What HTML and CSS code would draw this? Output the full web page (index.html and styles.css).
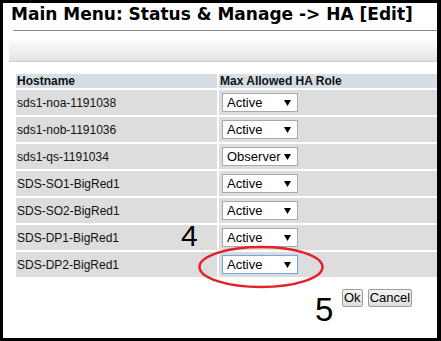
FILE: index.html
```html
<!DOCTYPE html>
<html>
<head>
<meta charset="utf-8">
<link rel="stylesheet" href="styles.css">
</head>
<body>
<div class="window">
  <h1 class="title">Main Menu: Status &amp; Manage -&gt; HA [Edit]</h1>
  <div class="rule"></div>
  <div class="toolbar"></div>
  <table class="grid">
    <tr class="head"><th class="c1">Hostname</th><th>Max Allowed HA Role</th></tr>
    <tr><td>sds1-noa-1191038</td><td><div class="sel"><span>Active</span><svg class="arr" width="7" height="6" viewBox="0 0 7 6"><polygon points="0,0 7,0 3.5,6"/></svg></div></td></tr>
    <tr><td>sds1-nob-1191036</td><td><div class="sel"><span>Active</span><svg class="arr" width="7" height="6" viewBox="0 0 7 6"><polygon points="0,0 7,0 3.5,6"/></svg></div></td></tr>
    <tr><td>sds1-qs-1191034</td><td><div class="sel"><span>Observer</span><svg class="arr" width="7" height="6" viewBox="0 0 7 6"><polygon points="0,0 7,0 3.5,6"/></svg></div></td></tr>
    <tr><td>SDS-SO1-BigRed1</td><td><div class="sel"><span>Active</span><svg class="arr" width="7" height="6" viewBox="0 0 7 6"><polygon points="0,0 7,0 3.5,6"/></svg></div></td></tr>
    <tr><td>SDS-SO2-BigRed1</td><td><div class="sel"><span>Active</span><svg class="arr" width="7" height="6" viewBox="0 0 7 6"><polygon points="0,0 7,0 3.5,6"/></svg></div></td></tr>
    <tr><td>SDS-DP1-BigRed1</td><td><div class="sel"><span>Active</span><svg class="arr" width="7" height="6" viewBox="0 0 7 6"><polygon points="0,0 7,0 3.5,6"/></svg></div></td></tr>
    <tr><td>SDS-DP2-BigRed1</td><td><div class="sel focus"><span>Active</span><svg class="arr" width="7" height="6" viewBox="0 0 7 6"><polygon points="0,0 7,0 3.5,6"/></svg></div></td></tr>
  </table>
  <div class="actions">
    <button class="btn">Ok</button>
    <button class="btn">Cancel</button>
  </div>
  <div class="note note4">4</div>
  <div class="note note5">5</div>
  <svg class="circle" width="128" height="46" viewBox="0 0 128 46"><ellipse cx="64" cy="22" rx="61.5" ry="20" fill="none" stroke="#e3212b" stroke-width="2.5"/></svg>
</div>
</body>
</html>
```

FILE: styles.css
```css
html, body {
  margin: 0;
  padding: 0;
  background: #000;
}
.window {
  position: relative;
  margin: 3px 4px 0 3px;
  width: 434px;
  height: 335px;
  background: #fff;
  overflow: hidden;
}
.title {
  margin: 0;
  padding: 1px 0 0 8px;
  font-family: "DejaVu Sans", Verdana, sans-serif;
  font-weight: bold;
  font-size: 17px;
  line-height: 20px;
  color: #000;
  white-space: nowrap;
}
.rule {
  margin: 6px 0 0 10px;
  height: 1px;
  background: #8a8a8a;
}
.toolbar {
  margin: 8px 0 0 6px;
  height: 22px;
  background: linear-gradient(#fdfdfd, #e3e3e3);
  border-bottom: 1px solid #cfcfcf;
}
.grid {
  margin: 10px 0 0 11px;
  border-spacing: 2px;
  width: 460px;
  font-family: "Liberation Sans", Arial, sans-serif;
  font-size: 12px;
  color: #111;
}
.grid th {
  background: #d5dde5;
  text-align: left;
  font-weight: bold;
  height: 14px;
  line-height: 14px;
  padding: 0 1px;
}
.grid th.c1 {
  width: 199px;
}
.grid td {
  background: #dddddd;
  height: 25px;
  padding: 0 1px;
  vertical-align: middle;
}
.sel {
  display: flex;
  align-items: center;
  justify-content: space-between;
  box-sizing: border-box;
  width: 76px;
  height: 19px;
  margin-left: 2px;
  padding: 0 6px 0 4px;
  background: #fff;
  border: 1px solid #a9a9a9;
  font-size: 13px;
  color: #000;
}
.sel.focus {
  border-color: #7ba7dd;
  box-shadow: 0 0 1px #9cc0ea;
}
.arr {
  fill: #000;
}
.actions {
  display: flex;
  gap: 5px;
  margin: 10px 0 0 339px;
}
.btn {
  margin: 0;
  height: 18px;
  padding: 0 1px;
  font-family: "Liberation Sans", Arial, sans-serif;
  font-size: 13px;
  line-height: 14px;
  color: #000;
  background: linear-gradient(#f2f2f2, #dedede);
  border: 1px solid #9c9c9c;
  border-radius: 2px;
}
.note {
  position: absolute;
  font-family: "Liberation Sans", Arial, sans-serif;
  color: #000;
}
.note4 {
  left: 178px;
  top: 218px;
  font-size: 30px;
  line-height: 30px;
}
.note5 {
  left: 312px;
  top: 290px;
  font-size: 33px;
  line-height: 33px;
}
.circle {
  position: absolute;
  left: 194px;
  top: 242px;
}
```
